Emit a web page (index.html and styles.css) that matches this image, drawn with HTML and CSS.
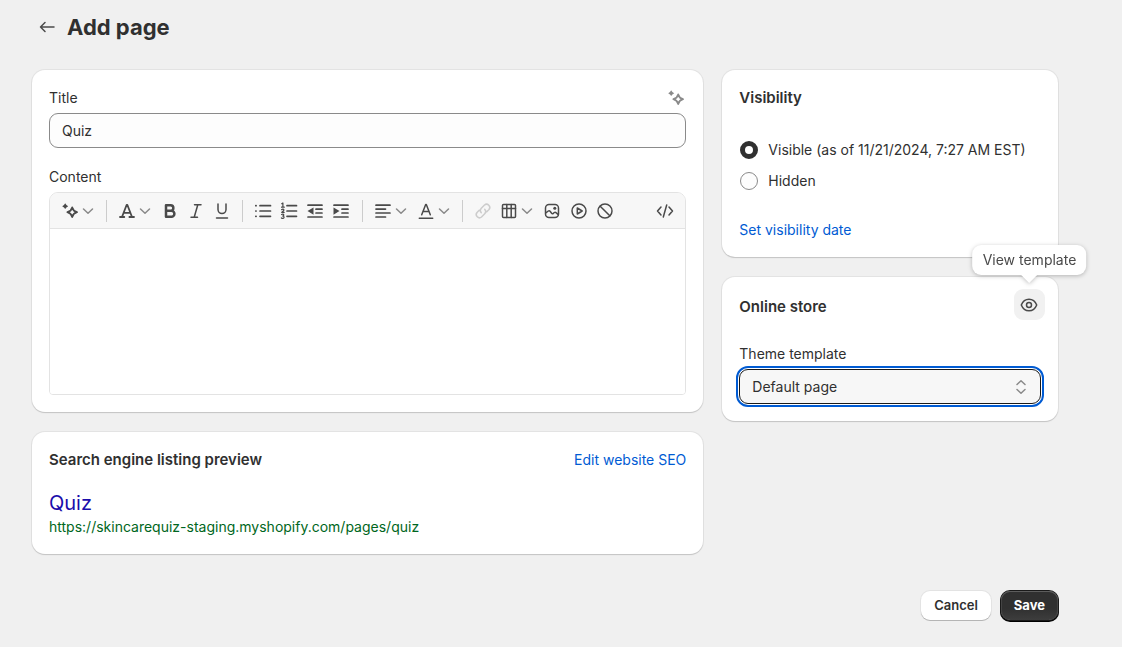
FILE: index.html
```html
<!DOCTYPE html>
<html lang="en">
<head>
<meta charset="utf-8">
<meta name="viewport" content="width=device-width, initial-scale=1">
<title>Add page</title>
<link rel="stylesheet" href="styles.css">
</head>
<body>
<svg class="defs" aria-hidden="true">
  <symbol id="chevron" viewBox="0 0 16 16"><path d="M3.500 6 8 10.300 12.500 6"/></symbol>
  <symbol id="sparkle" viewBox="0 0 20 20">
    <path d="M12.200 6.400c.7 2.700 1.900 3.900 4.800 4.800-2.900.9-4.100 2.100-4.800 4.800-.7-2.700-1.900-3.900-4.800-4.800 2.900-.9 4.100-2.100 4.800-4.800Z" stroke-width="1.800"/>
    <path class="solid" d="M5.200 2.300 6.400 4 8.200 5.200 6.400 6.400 5.200 8.100 4 6.400 2.200 5.200 4 4Z"/>
  </symbol>
</svg>
<main class="page">
  <header class="page-header">
    <a class="back" href="#" aria-label="Back">
      <svg class="icon" viewBox="0 0 20 20"><path d="M17 10H3.500M8 5.500 3.500 10 8 14.500"/></svg>
    </a>
    <h1>Add page</h1>
  </header>

  <form class="layout">
    <div class="column">
      <section class="card">
        <div class="label-row">
          <label for="title">Title</label>
          <button type="button" class="magic" aria-label="Generate title"><svg class="icon"><use href="#sparkle"/></svg></button>
        </div>
        <input class="field" id="title" type="text" value="Quiz">

        <label class="content-label" for="content">Content</label>
        <div class="editor">
          <div class="toolbar">
            <button type="button" class="tool" aria-label="Generate text"><svg class="icon"><use href="#sparkle"/></svg><svg class="chevron"><use href="#chevron"/></svg></button>
            <span class="divider"></span>
            <button type="button" class="tool menu" aria-label="Formatting"><svg class="icon" viewBox="0 0 20 20"><path d="M5 16 9.600 4h.8L15 16M6.800 11.800h6.400M3 16h4.300M12.400 16H17" stroke-width="1.800"/></svg><svg class="chevron"><use href="#chevron"/></svg></button>
            <button type="button" class="tool" aria-label="Bold"><svg class="icon" viewBox="0 0 20 20"><path d="M6 4.200h4.600a2.700 2.700 0 0 1 0 5.500H6ZM6 9.700h5.400a3 3 0 0 1 0 6H6Z" stroke-width="2.500"/></svg></button>
            <button type="button" class="tool" aria-label="Italic"><svg class="icon" viewBox="0 0 20 20"><path d="M8.500 3.800H15M5 16.200h6.500M11.800 3.800 8.200 16.200"/></svg></button>
            <button type="button" class="tool" aria-label="Underline"><svg class="icon" viewBox="0 0 20 20"><path d="M6 3v5.600a4 4 0 0 0 8 0V3M4.500 17h11"/></svg></button>
            <span class="divider"></span>
            <button type="button" class="tool" aria-label="Bulleted list"><svg class="icon" viewBox="0 0 20 20"><path d="M7 4.700h10.500M7 10h10.500M7 15.300h10.500M2.800 4.700h.3M2.800 10h.3M2.800 15.300h.3" stroke-width="1.700"/></svg></button>
            <button type="button" class="tool" aria-label="Numbered list"><svg class="icon" viewBox="0 0 20 20"><path d="M8 4.700h9.500M8 10h9.500M8 15.300h9.500" stroke-width="1.700"/><path d="M2.700 2.700 3.900 2v4.200M2.500 6.200h2.800M2.600 8.700c1-.9 2.300-.6 2.300.3 0 .8-1.200 1.300-2.200 2.300h2.500M2.600 13.500c.9-.6 2.200-.4 2.200.5s-.8 1-1.200 1c.6 0 1.500.2 1.500 1.200 0 1.200-1.600 1.500-2.700.7" stroke-width="1.200"/></svg></button>
            <button type="button" class="tool" aria-label="Outdent"><svg class="icon" viewBox="0 0 20 20"><path d="M3 4.200h14M11 8.200h6M11 12h6M3 16h14" stroke-width="1.700"/><path class="solid" d="M8.500 6.500v7.200L2.500 10.100Z"/></svg></button>
            <button type="button" class="tool menu" aria-label="Indent"><svg class="icon" viewBox="0 0 20 20"><path d="M3 4.200h14M11 8.200h6M11 12h6M3 16h14" stroke-width="1.700"/><path class="solid" d="M2.500 6.500v7.200l6-3.600Z"/></svg></button>
            <span class="divider"></span>
            <button type="button" class="tool menu" aria-label="Alignment"><svg class="icon" viewBox="0 0 20 20"><path d="M3 4.200h14M3 8.100h9.500M3 12h14M3 16h9.500" stroke-width="1.700"/></svg><svg class="chevron"><use href="#chevron"/></svg></button>
            <button type="button" class="tool" aria-label="Text color"><svg class="icon" viewBox="0 0 20 20"><path d="M5.700 13.700 9.700 3.500h.6l4 10.200M7 10.500h6M3.300 17.300h13.400"/></svg><svg class="chevron"><use href="#chevron"/></svg></button>
            <span class="divider"></span>
            <button type="button" class="tool" aria-label="Link" disabled><svg class="icon" viewBox="0 0 20 20"><path d="M8.300 11.700a3.200 3.200 0 0 1 0-4.500l3.200-3.200a3.200 3.200 0 0 1 4.500 4.500l-2.200 2.200M11.700 8.300a3.200 3.200 0 0 1 0 4.500l-3.200 3.200A3.200 3.200 0 0 1 4 11.500l2.200-2.200"/></svg></button>
            <button type="button" class="tool menu" aria-label="Table"><svg class="icon" viewBox="0 0 20 20"><rect x="3.500" y="3.500" width="13" height="13" rx="1"/><path d="M3.500 7.500h13M7.800 3.500v13M12.200 3.500v13"/></svg><svg class="chevron"><use href="#chevron"/></svg></button>
            <button type="button" class="tool menu" aria-label="Image"><svg class="icon" viewBox="0 0 20 20"><rect x="3.500" y="3.500" width="13" height="13" rx="3.500"/><path d="m3.800 11.800 2.500-1.800c.6-.4 1.300-.3 1.800.3l1.500 1.900c.5.600 1.100.6 1.700.1l1-.8c.5-.4 1.200-.4 1.700.1l2 1.800"/><circle class="solid" cx="12.800" cy="7.200" r="1.500"/></svg></button>
            <button type="button" class="tool" aria-label="Video"><svg class="icon" viewBox="0 0 20 20"><circle cx="10" cy="10" r="7"/><path d="M8.300 7v6l4.900-3Z"/></svg></button>
            <button type="button" class="tool" aria-label="Clear formatting"><svg class="icon" viewBox="0 0 20 20"><circle cx="10" cy="10" r="7"/><path d="m5.200 5.200 9.600 9.600"/></svg></button>
            <button type="button" class="tool code" aria-label="Show HTML"><svg class="icon" viewBox="0 0 20 20"><path d="M6 6 2.500 10 6 14M14 6l3.500 4-3.500 4M11.700 4 8.300 16"/></svg></button>
          </div>
          <textarea id="content"></textarea>
        </div>
      </section>

      <section class="card">
        <div class="label-row">
          <h2>Search engine listing preview</h2>
          <a class="link" href="#">Edit website SEO</a>
        </div>
        <p class="seo-title">Quiz</p>
        <p class="seo-url">https://skincarequiz-staging.myshopify.com/pages/quiz</p>
      </section>
    </div>

    <div class="column">
      <section class="card">
        <h2>Visibility</h2>
        <div class="choices">
          <label class="choice"><input type="radio" name="visibility" checked>Visible (as of 11/21/2024, 7:27 AM EST)</label>
          <label class="choice"><input type="radio" name="visibility">Hidden</label>
        </div>
        <a class="link" href="#">Set visibility date</a>
      </section>

      <section class="card">
        <div class="store-header">
          <h2>Online store</h2>
          <button type="button" class="view" aria-label="View template" aria-describedby="view-tip">
            <svg class="icon" viewBox="0 0 20 20"><path d="M2.300 10C3.800 6.200 6.700 4.200 10 4.200s6.200 2 7.700 5.800c-1.500 3.800-4.400 5.800-7.700 5.800S3.800 13.800 2.300 10Z"/><circle cx="10" cy="10" r="2.500"/></svg>
            <span class="tooltip" id="view-tip" role="tooltip">View template</span>
          </button>
        </div>
        <label class="select-label" for="template">Theme template</label>
        <div class="select-wrap">
          <select class="field" id="template"><option>Default page</option></select>
          <svg class="arrows" viewBox="0 0 16 20"><path d="M4 7.500 8 3.800l4 3.700M4 12.500l4 3.700 4-3.700"/></svg>
        </div>
      </section>
    </div>

    <footer class="actions">
      <button type="button" class="button">Cancel</button>
      <button type="submit" class="button primary">Save</button>
    </footer>
  </form>
</main>
</body>
</html>
```

FILE: styles.css
```css
* { box-sizing: border-box; }

body {
  margin: 0;
  background: #f0f0f0;
  color: #303030;
  font: 400 14px/21px Inter, "Liberation Sans", sans-serif;
  font-optical-sizing: none;
}

h1, h2, p { margin: 0; }
h1 { font-size: 22px; line-height: 28px; font-weight: 700; }
h2 { font-size: 15px; line-height: 21px; font-weight: 600; }

button, input, select, textarea { font: inherit; color: inherit; }
button { padding: 0; border: 0; background: none; }

svg {
  display: block;
  flex: none;
  fill: none;
  stroke: currentColor;
  stroke-width: 1.5;
  stroke-linecap: round;
  stroke-linejoin: round;
}
.solid { fill: currentColor; stroke: none; }
.defs { position: absolute; width: 0; height: 0; }
.icon { width: 20px; height: 20px; }
.chevron { width: 16px; height: 16px; color: #8a8a8a; }

.page { padding: 13px 64px 26px 32px; }

.page-header {
  display: flex;
  align-items: center;
  gap: 10px;
  padding-left: 5px;
  margin-bottom: 29px;
}
.back { color: #4a4a4a; }

.layout {
  display: grid;
  grid-template-columns: 2fr 1fr;
  column-gap: 19px;
  row-gap: 37px;
  align-items: start;
}
.column { display: grid; gap: 20px; min-width: 0; }

.card {
  min-width: 0;
  padding: 17px;
  border-radius: 13px;
  background: #fff;
  box-shadow: 0 1px 1px #c4c4c4, 0 0 0 1px #e3e3e3;
}

.label-row { display: flex; justify-content: space-between; align-items: center; }
.magic { height: 20px; color: #8a8a8a; }

.field {
  display: block;
  width: 100%;
  height: 35px;
  margin-top: 5px;
  padding: 0 12px;
  border: 1px solid #8a8a8a;
  border-radius: 9px;
  background: #fdfdfd;
}

.content-label { display: block; margin-top: 18px; }

.editor {
  margin-top: 5px;
  border: 1px solid #e3e3e3;
  border-radius: 9px 9px 4px 4px;
  overflow: hidden;
}
.toolbar {
  display: flex;
  align-items: center;
  height: 36px;
  padding: 0 7px;
  border-bottom: 1px solid #e3e3e3;
  background: #f7f7f7;
}
.tool { display: flex; align-items: center; padding: 0 3px; color: #4a4a4a; }
.tool:disabled { color: #cccccc; }
.menu { margin-right: 1px; }
.code { margin-left: auto; }
.divider { width: 1px; height: 22px; margin: 0 7px; background: #cccccc; }

textarea {
  display: block;
  width: 100%;
  height: 165px;
  padding: 12px;
  border: 0;
  background: #fff;
  resize: none;
}

.link { color: #005bd3; text-decoration: none; }
.seo-title { margin-top: 20px; color: #1a0dab; font-size: 20px; font-weight: 400; line-height: 26px; }
.seo-url { color: #006621; overflow-wrap: anywhere; }

.choices { display: grid; gap: 10px; margin: 31px 0 28px; }
.choice { display: flex; align-items: center; gap: 10px; }
.choice input {
  appearance: none;
  flex: none;
  width: 18px;
  height: 18px;
  margin: 0 0 0 1px;
  border: 1px solid #8a8a8a;
  border-radius: 50%;
  background: #fdfdfd;
}
.choice input:checked { border: 5px solid #303030; background: #fff; }

.store-header {
  display: flex;
  justify-content: space-between;
  align-items: center;
  margin: -5px -4px 0 0;
}
.store-header h2 { padding-top: 4px; }
.view {
  position: relative;
  display: grid;
  place-items: center;
  width: 31px;
  height: 31px;
  border-radius: 9px;
  background: #f1f1f1;
  color: #4a4a4a;
}
.tooltip {
  position: absolute;
  bottom: 45px;
  left: 50%;
  transform: translateX(-50%);
  padding: 4px 10px 5px;
  border-radius: 9px;
  background: #fff;
  color: #4a4a4a;
  white-space: nowrap;
  filter: drop-shadow(0 1px 2px #00000040);
}
.tooltip::after {
  content: "";
  position: absolute;
  top: 100%;
  left: 50%;
  transform: translateX(-50%);
  border: 8px solid transparent;
  border-top-color: #fff;
  border-bottom: 0;
}

.select-label { display: block; margin-top: 23px; }
.select-wrap { position: relative; }
.select-wrap select {
  appearance: none;
  border-color: #1a1a1a;
  background: #f7f7f7;
  outline: 2px solid #005bd3;
  outline-offset: 1px;
}
.arrows {
  position: absolute;
  top: 8px;
  right: 12px;
  width: 16px;
  height: 20px;
  color: #8a8a8a;
  pointer-events: none;
}

.actions { grid-column: 1 / -1; display: flex; justify-content: flex-end; gap: 10px; }
.button {
  height: 29px;
  padding: 0 13px;
  border-radius: 9px;
  background: #fff;
  box-shadow: 0 1px 0 #b5b5b5, 0 0 0 1px #e3e3e3;
  font-size: 13px;
  font-weight: 600;
}
.primary {
  background: linear-gradient(#303030 60%, #3d3d3d);
  color: #fff;
  font-weight: 700;
  box-shadow: 0 0 0 1px #1a1a1a, 0 1px 0 1px #000, inset 0 1px 0 #5c5c5c, inset 1px 0 0 #444, inset -1px 0 0 #444;
}
```
